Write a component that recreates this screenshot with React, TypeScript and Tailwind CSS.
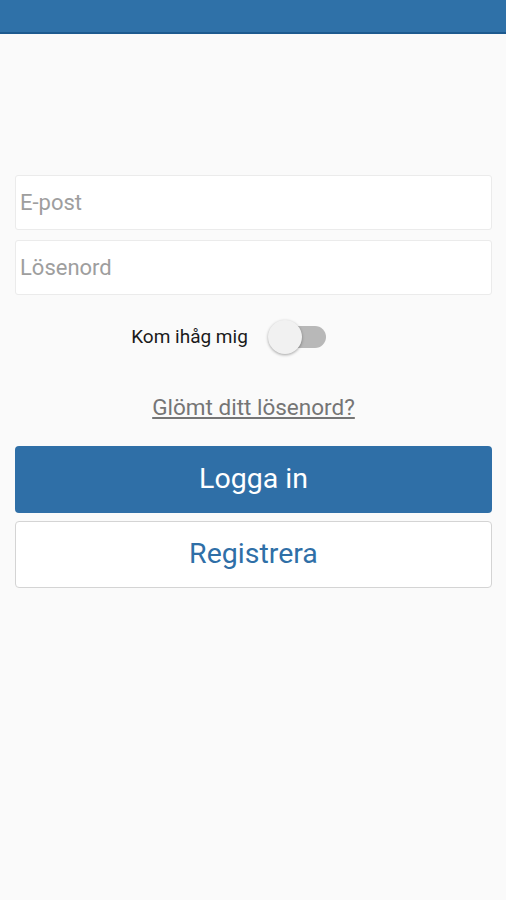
import { useState } from 'react';

const App = () => {
	const [remember, setRemember] = useState(false);

	return (
		<div
			className="min-h-[900px] bg-[#fafafa] flex flex-col"
			style={{ fontFamily: 'Roboto, "Noto Sans", sans-serif' }}
		>
			<div className="h-[34px] bg-[#2f71a8] border-b-2 border-[#1d5a8f]" />

			<div className="pl-[15px] pr-[14px] pt-[141px] flex flex-col">
				<input
					className="h-[55px] bg-white border border-[#ebebeb] rounded-[3px] px-[4px] text-[22px] text-[#333] placeholder:text-[#9e9e9e] outline-none"
					placeholder="E-post"
				/>
				<input
					type="password"
					className="mt-[10px] h-[55px] bg-white border border-[#ebebeb] rounded-[3px] px-[4px] text-[22px] text-[#333] placeholder:text-[#9e9e9e] outline-none"
					placeholder="Lösenord"
				/>

				<div className="mt-[24px] flex items-center justify-center gap-[20px] pr-[50px]">
					<span className="text-[19px] text-[#1a1a1a]">Kom ihåg mig</span>
					<button
						onClick={() => setRemember(!remember)}
						className="relative w-[58px] h-[36px] flex items-center"
					>
						<span className="ml-[18px] w-[40px] h-[22px] rounded-full bg-[#b8b8b8]" />
						<span className="absolute left-0 top-[1px] w-[34px] h-[34px] rounded-full bg-[#f1f1f1] shadow-[0_1px_3px_rgba(0,0,0,0.35)]" />
					</button>
				</div>

				<a className="mt-[36px] self-center text-[22.5px] text-[#757575] underline underline-offset-2">
					Glömt ditt lösenord?
				</a>

				<button className="mt-[21px] h-[67px] rounded-[4px] bg-[#2f6fa7] text-white text-[28.5px]">
					Logga in
				</button>
				<button className="mt-[8px] h-[67px] rounded-[4px] bg-white border border-[#d4d4d4] text-[#2f6fa7] text-[28.5px]">
					Registrera
				</button>
			</div>
		</div>
	);
};

export default App;
